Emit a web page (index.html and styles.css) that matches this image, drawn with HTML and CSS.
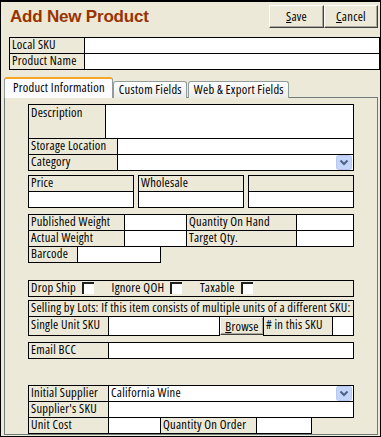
FILE: index.html
```html
<!DOCTYPE html>
<html lang="en">
<head>
  <meta charset="UTF-8">
  <title>Add New Product</title>
  <link rel="stylesheet" href="styles.css">
</head>
<body>
<div class="window">
  <div class="header">
    <h1 class="title">Add New Product</h1>
    <div class="actions">
      <button class="btn btn-save"><u>S</u>ave</button>
      <button class="btn btn-cancel"><u>C</u>ancel</button>
    </div>
  </div>

  <table class="grid ident">
    <colgroup><col style="width:75px"><col></colgroup>
    <tr><td class="lbl">Local SKU</td><td class="val"></td></tr>
    <tr><td class="lbl">Product Name</td><td class="val"></td></tr>
  </table>

  <div class="tabs">
    <div class="tab active">Product Information</div>
    <div class="tab">Custom Fields</div>
    <div class="tab">Web &amp; Export Fields</div>
  </div>

  <div class="panel">
    <!-- description / location / category -->
    <table class="grid full desc">
      <colgroup><col style="width:77px"><col style="width:12px"><col></colgroup>
      <tr class="tall"><td class="lbl top">Description</td><td class="val" colspan="2"></td></tr>
      <tr><td class="lbl" colspan="2">Storage Location</td><td class="val"></td></tr>
      <tr><td class="lbl" colspan="2">Category</td><td class="val select"><span class="drop"><svg width="16" height="15" viewBox="0 0 16 15"><rect x="0.5" y="0.5" width="15" height="14" rx="2" fill="#c4d5fb" stroke="#b5c8f2"/><path d="M4.5 5.5 L8 9 L11.5 5.5" fill="none" stroke="#4d6185" stroke-width="2"/></svg></span></td></tr>
    </table>

    <!-- prices -->
    <div class="boxes">
      <table class="grid box">
        <tr><td class="lbl">Price</td></tr>
        <tr><td class="val"></td></tr>
      </table>
      <table class="grid box">
        <tr><td class="lbl">Wholesale</td></tr>
        <tr><td class="val"></td></tr>
      </table>
      <table class="grid box">
        <tr><td class="lbl"></td></tr>
        <tr><td class="val"></td></tr>
      </table>
    </div>

    <!-- weights -->
    <table class="grid full weights">
      <colgroup><col style="width:96px"><col style="width:62px"><col style="width:110px"><col></colgroup>
      <tr><td class="lbl">Published Weight</td><td class="val"></td><td class="lbl">Quantity On Hand</td><td class="val"></td></tr>
      <tr><td class="lbl">Actual Weight</td><td class="val"></td><td class="lbl">Target Qty.</td><td class="val"></td></tr>
    </table>
    <table class="grid barcode">
      <colgroup><col style="width:49px"><col></colgroup>
      <tr><td class="lbl">Barcode</td><td class="val"></td></tr>
    </table>

    <!-- flags -->
    <table class="grid full flags">
      <tr><td class="lbl">
        <span class="flag">Drop Ship<span class="check"></span></span>
        <span class="flag">Ignore QOH<span class="check"></span></span>
        <span class="flag">Taxable<span class="check"></span></span>
      </td></tr>
    </table>

    <!-- lots -->
    <table class="grid full lots">
      <colgroup><col style="width:80px"><col style="width:111px"><col style="width:44px"><col style="width:69px"><col></colgroup>
      <tr><td class="lbl" colspan="5">Selling by Lots: If this item consists of multiple units of a different SKU:</td></tr>
      <tr><td class="lbl">Single Unit SKU</td><td class="val"></td><td class="btn-cell"><button class="btn btn-small"><u>B</u>rowse</button></td><td class="lbl">&#35; in this SKU</td><td class="val"></td></tr>
    </table>

    <!-- email -->
    <table class="grid full email">
      <colgroup><col style="width:80px"><col></colgroup>
      <tr><td class="lbl">Email BCC</td><td class="val"></td></tr>
    </table>

    <!-- supplier -->
    <table class="grid full supplier">
      <colgroup><col style="width:80px"><col></colgroup>
      <tr><td class="lbl">Initial Supplier</td><td class="val select">California Wine<span class="drop"><svg width="16" height="15" viewBox="0 0 16 15"><rect x="0.5" y="0.5" width="15" height="14" rx="2" fill="#c4d5fb" stroke="#b5c8f2"/><path d="M4.5 5.5 L8 9 L11.5 5.5" fill="none" stroke="#4d6185" stroke-width="2"/></svg></span></td></tr>
      <tr><td class="lbl">Supplier's SKU</td><td class="val"></td></tr>
    </table>
    <table class="grid cost">
      <colgroup><col style="width:80px"><col style="width:52px"><col style="width:96px"><col></colgroup>
      <tr><td class="lbl">Unit Cost</td><td class="val"></td><td class="lbl">Quantity On Order</td><td class="val"></td></tr>
    </table>
  </div>
</div>
</body>
</html>
```

FILE: styles.css
```css
body {
  margin: 0;
  background: #ece9d8;
  font-family: "Open Sans", "Liberation Sans", Arial, sans-serif;
  font-stretch: 75%;
  font-size: 12.5px;
  letter-spacing: 0.25px;
  color: #000;
}

.window {
  width: 381px;
  height: 437px;
  box-sizing: border-box;
  border: 1px solid #000;
  border-top-width: 2px;
  background: #ece9d8;
  padding: 0 2px 0 3px;
}

.header {
  display: flex;
  justify-content: space-between;
  align-items: flex-start;
  height: 35px;
}

.title {
  margin: 5px 0 0 6px;
  font-family: "Liberation Sans", Arial, sans-serif;
  font-stretch: normal;
  font-size: 17px;
  font-weight: bold;
  color: #993300;
  letter-spacing: -0.2px;
}

.actions {
  display: flex;
  margin-top: 3px;
}

.btn {
  font-family: inherit;
  font-stretch: inherit;
  font-size: 12.5px;
  letter-spacing: 0.25px;
  background: #ece9d8;
  color: #000;
  border: 1px solid;
  border-color: #fff #404040 #404040 #fff;
  box-shadow: inset -1px -1px 0 #aca899;
  padding: 0;
  height: 23px;
  cursor: pointer;
}
.btn-save { width: 55px; }
.btn-cancel { width: 54px; }
.btn u { text-decoration: underline; }

/* form grids */
.grid {
  border-collapse: collapse;
  table-layout: fixed;
}
.grid td {
  border: 1px solid #000;
  height: 13px;
  padding: 0 2px 2px;
  line-height: 13px;
  white-space: nowrap;
  overflow: hidden;
}
.grid .lbl { background: #ece9d8; }
.grid .val { background: #fff; }
.grid .top { vertical-align: top; padding-top: 1px; }
.grid tr.tall td { height: 30px; }

.ident {
  width: 371px;
  margin-left: 5px;
}

/* tabs */
.tabs {
  display: flex;
  align-items: flex-end;
  margin-top: 7px;
  position: relative;
  z-index: 1;
  margin-bottom: -1px;
}
.tab {
  height: 16px;
  line-height: 16px;
  padding: 0 4px 0 5px;
  border: 1px solid #919b9c;
  border-bottom: none;
  border-radius: 3px 3px 0 0;
  background: linear-gradient(#ffffff, #ecebe6);
  margin-right: 1px;
}
.tab.active {
  height: 19px;
  line-height: 18px;
  padding: 0 7px 0 8px;
  border-top: 2px solid #f5a623;
  background: #fcfcfe;
  margin-right: 0;
}

.panel {
  height: 338px;
  box-sizing: border-box;
  border: 1px solid #6f7a7b;
  padding: 6px 23px 0 23px;
  background: #ece9d8;
}

.full { width: 326px; }

.select { position: relative; }
.drop {
  position: absolute;
  right: 1px;
  top: 0;
  line-height: 0;
}

.boxes {
  display: flex;
  justify-content: space-between;
  margin-top: 4px;
  width: 326px;
}
.box { width: 106px; }

.weights { margin-top: 6px; }
.barcode { width: 133px; margin-top: -1px; }

.flags { margin-top: 17px; }
.flag { margin-right: 15px; }
.check {
  display: inline-block;
  width: 10px;
  height: 10px;
  background: #fff;
  border-top: 2px solid #202020;
  border-left: 2px solid #202020;
  vertical-align: -2px;
  margin-left: 6px;
}

.lots { margin-top: 3px; }
.grid td.btn-cell {
  padding: 0;
  border-top: none;
  border-bottom: none;
}
.btn-small {
  width: 44px;
  height: 18px;
  display: block;
}

.email { margin-top: 6px; }
.supplier { margin-top: 26px; }
.cost { width: 284px; margin-top: -1px; }
```
